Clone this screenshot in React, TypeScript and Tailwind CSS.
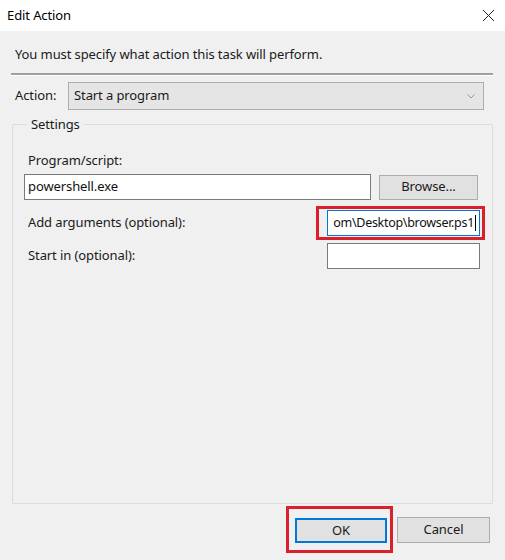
import React from "react";

const font = { fontFamily: '"Noto Sans", "Open Sans", sans-serif' };

function TextBox({ value, className }: { value?: string; className: string }) {
  return (
    <div
      className={`h-[26px] bg-white border border-[#7a7a7a] flex items-center px-[3px] text-[13px] text-[#111] overflow-hidden whitespace-nowrap ${className}`}
    >
      {value}
    </div>
  );
}

export default function App() {
  return (
    <div className="w-[505px] h-[560px] bg-[#f0f0f0] flex flex-col text-[#1a1a1a] tracking-[-0.1px]" style={font}>
      {/* title bar */}
      <div className="h-[31px] bg-white flex items-center justify-between pl-[7px] pr-[10px] shrink-0">
        <span className="text-[13px] text-black">Edit Action</span>
        <svg width="13" height="13" viewBox="0 0 13 13" className="text-[#222]">
          <path d="M1 1 L12 12 M12 1 L1 12" stroke="currentColor" strokeWidth="1" fill="none" />
        </svg>
      </div>

      <div className="px-[11px] pt-[14px] flex flex-col">
        <p className="pl-[4px] text-[13px] leading-[18px]">You must specify what action this task will perform.</p>
        <div className="mt-[10px] border-t-2 border-[#a0a0a0] border-b border-b-white w-[482px]" />

        <div className="mt-[6px] flex items-center">
          <span className="pl-[4px] w-[57px] text-[13px]">Action:</span>
          <div className="w-[416px] h-[28px] bg-[#e5e5e5] border border-[#adadad] flex items-center justify-between pl-[5px] pr-[8px] text-[13px]">
            <span>Start a program</span>
            <svg width="8" height="5" viewBox="0 0 8 5">
              <path d="M0.5 0.5 L4 4 L7.5 0.5" stroke="#9a9a9a" strokeWidth="1" fill="none" />
            </svg>
          </div>
        </div>

        <fieldset className="mt-[6px] ml-[1px] w-[481px] h-[388px] border border-[#dcdcdc] rounded-[1px] px-[11px] pb-0 pt-0 m-0">
          <legend className="ml-[3px] px-[4px] text-[13px] leading-[16px]">Settings</legend>
          <div className="flex flex-col">
            <span className="mt-[19px] pl-[4px] text-[13px] leading-[18px]">Program/script:</span>
            <div className="mt-[5px] flex items-center">
              <TextBox value="powershell.exe" className="w-[347px] h-[25px]" />
              <button className="ml-[8px] w-[99px] h-[25px] bg-[#e1e1e1] border border-[#adadad] text-[13px]">
                Browse...
              </button>
            </div>
            <div className="mt-[10px] flex items-center justify-between h-[26px]">
              <span className="pl-[4px] text-[13px]">Add arguments (optional):</span>
              <div className="relative mr-[1px]">
                <div className="w-[153px] h-[26px] bg-white border border-[#0078d7] flex items-center justify-end pr-[3px] text-[12.5px] tracking-[-0.3px] text-[#111] whitespace-nowrap">
                  <span>om\Desktop\browser.ps1</span>
                  <span className="w-px h-[16px] bg-black ml-px" />
                </div>
                <div className="absolute -left-[11px] -right-[5px] -top-[4px] -bottom-[4px] border-[3px] border-[#d9202c]" />
              </div>
            </div>
            <div className="mt-[7px] flex items-center justify-between">
              <span className="pl-[4px] text-[13px]">Start in (optional):</span>
              <TextBox className="w-[153px] h-[25px] mr-[1px]" />
            </div>
          </div>
        </fieldset>

        <div className="mt-[13px] flex justify-end pr-[4px] gap-[10px]">
          <div className="relative">
            <button className="w-[92px] h-[25px] bg-[#e1e1e1] border-2 border-[#0078d7] text-[13px]">OK</button>
            <div className="absolute -left-[9px] -right-[6px] -top-[11px] -bottom-[10px] border-[3px] border-[#d9202c]" />
          </div>
          <button className="w-[93px] h-[26px] bg-[#e1e1e1] border border-[#adadad] text-[13px]">Cancel</button>
        </div>
      </div>
    </div>
  );
}
